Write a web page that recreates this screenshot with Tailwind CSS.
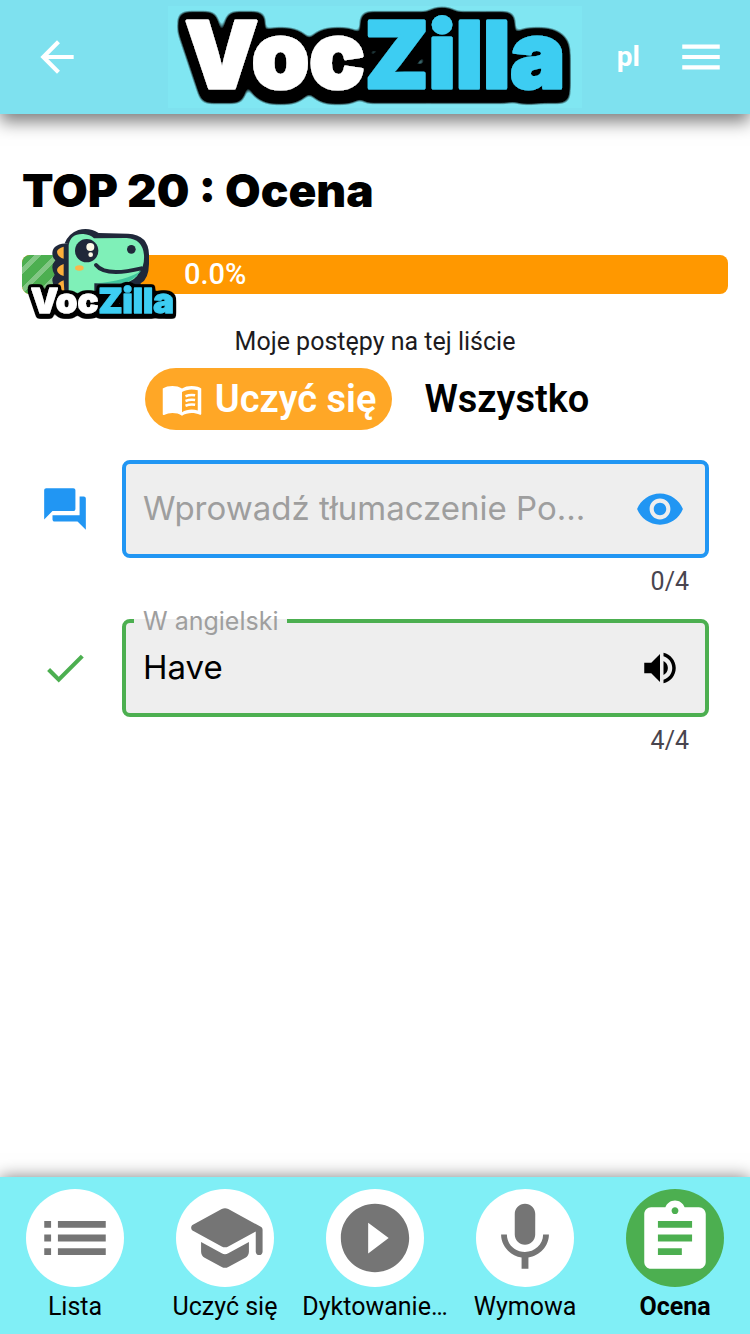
<!DOCTYPE html>
<html lang="pl">
<head>
<meta charset="utf-8">
<meta name="viewport" content="width=device-width, initial-scale=1">
<title>VocZilla</title>
<script src="https://cdn.jsdelivr.net/npm/@tailwindcss/browser@4"></script>
</head>
<body class="flex min-h-screen flex-col bg-white font-[Roboto,sans-serif] text-black">

<header class="relative z-10 flex h-[114px] items-center bg-[#7ee1ef] px-6 text-white shadow-[0_8px_16px_rgba(0,0,0,0.5)]">
  <div class="flex flex-1">
    <button type="button" aria-label="Wstecz" class="ml-2">
      <svg viewBox="0 0 24 24" class="size-[50px]" fill="currentColor"><path d="M20 11H7.83l5.59-5.59L12 4l-8 8 8 8 1.41-1.41L7.83 13H20v-2z"/></svg>
    </button>
  </div>
  <a href="#" aria-label="VocZilla" class="bg-[#80e6f2]">
    <svg viewBox="0 0 414 102" class="h-[102px] w-[414px] overflow-visible">
      <!-- Rounded black outline, a little heavier below the letters -->
      <filter id="outline" x="-10%" y="-30%" width="120%" height="160%">
        <feMorphology in="SourceAlpha" operator="dilate" radius="4"/>
        <feGaussianBlur stdDeviation="4"/>
        <feComponentTransfer result="rim"><feFuncA type="linear" slope="7" intercept="-0.800"/></feComponentTransfer>
        <feOffset in="rim" dy="6" result="low"/>
        <feMerge><feMergeNode in="low"/><feMergeNode in="rim"/><feMergeNode in="SourceGraphic"/></feMerge>
      </filter>
      <text x="207" y="82" font-family="Inter, sans-serif" font-weight="900" font-size="92" text-anchor="middle" stroke-linejoin="round" stroke-width="3" fill="#fff" stroke="#fff" filter="url(#outline)">Voc<tspan fill="#3dcdf2" stroke="#3dcdf2">Zilla</tspan></text>
    </svg>
  </a>
  <div class="flex flex-1 items-center justify-end gap-9">
    <button type="button" class="text-[28px] font-bold">pl</button>
    <button type="button" aria-label="Menu">
      <svg viewBox="0 0 24 24" class="size-[50px]" fill="currentColor"><path d="M3 18h18v-2H3v2zm0-5h18v-2H3v2zm0-7v2h18V6H3z"/></svg>
    </button>
  </div>
</header>

<main class="flex flex-1 flex-col px-[22px] pt-12">
  <h1 class="font-[Inter,sans-serif] text-[46px] leading-[56px] font-black">TOP 20 : Ocena</h1>

  <div class="relative mt-[37px] flex h-[39px] items-center rounded-lg bg-[#ff9800]" role="progressbar" aria-valuenow="0" aria-valuemin="0" aria-valuemax="100" aria-label="Moje postępy na tej liście">
    <div class="h-full w-[70px] rounded-l-lg bg-[#4caf50] bg-[repeating-linear-gradient(135deg,transparent_0_9px,rgba(255,255,255,0.3)_9px_14px)]"></div>
    <span class="ml-[92px] text-[29px] font-medium text-white">0.0%</span>
    <svg viewBox="45 24 465 276" class="absolute -top-[27px] left-[3px] h-[92px] w-[155px] overflow-visible" aria-hidden="true">
      <filter id="outline-small" x="-10%" y="-30%" width="120%" height="160%">
        <feMorphology in="SourceAlpha" operator="dilate" radius="6"/>
        <feGaussianBlur stdDeviation="5"/>
        <feComponentTransfer result="rim"><feFuncA type="linear" slope="5" intercept="-0.500"/></feComponentTransfer>
        <feOffset in="rim" dy="7" result="low"/>
        <feMerge><feMergeNode in="low"/><feMergeNode in="rim"/><feMergeNode in="SourceGraphic"/></feMerge>
      </filter>
      <g stroke-linejoin="round">
        <path d="M178 70Q128 70 127 99Q127 113 136 121Q119 139 134 164Q119 181 136 204L151 244H392V190Q416 178 417 132V104Q416 44 354 41L266 39Q238 21 205 30Q176 40 164 70Z" fill="#20283a"/>
        <path d="M161 80Q142 86 141 95Q142 111 161 116ZM161 132Q142 140 141 150Q142 162 161 168ZM161 181Q142 188 142 199L150 213H163Z" fill="#fcaf3b"/>
        <path d="M176 244V75Q182 40 220 42Q240 43 252 55L350 54Q398 57 402 105Q404 138 388 155Q378 183 339 190H253V244Z" fill="#7ff0b8"/>
        <path d="M394 152Q368 184 339 190H253Q350 182 394 152Z" fill="#3fc59c"/>
        <path d="M258 135C280 163 340 158 394 145" fill="none" stroke="#20283a" stroke-width="12" stroke-linecap="round"/>
        <circle cx="230" cy="92" r="35" fill="#20283a"/>
        <circle cx="241" cy="81" r="12" fill="#fffbe9"/>
        <circle cx="242" cy="104" r="7" fill="#fffbe9"/>
        <circle cx="364" cy="88" r="13" fill="#20283a"/>
        <ellipse cx="208" cy="144" rx="13" ry="8" fill="#f9b84b"/>
      </g>
      <text x="277" y="279" font-family="Inter, sans-serif" font-weight="900" font-size="104" text-anchor="middle" stroke-linejoin="round" stroke-width="3" fill="#fff" stroke="#fff" filter="url(#outline-small)">Voc<tspan fill="#3dcdf2" stroke="#3dcdf2">Zilla</tspan></text>
    </svg>
  </div>

  <p class="mt-8 text-center text-[25px] leading-8 text-[#1d1b20]">Moje postępy na tej liście</p>

  <div class="mt-[10px] flex justify-center gap-4 text-[38px] leading-none font-semibold">
    <button type="button" class="flex h-[62px] items-center gap-3 rounded-full bg-[#ffa726] px-4 text-white">
      <svg viewBox="0 0 24 24" class="size-[42px]" fill="currentColor"><path d="M21 5c-1.11-.35-2.33-.5-3.5-.5-1.95 0-4.05.4-5.5 1.5-1.45-1.1-3.55-1.5-5.5-1.5S2.45 4.9 1 6v14.65c0 .25.25.5.5.5.1 0 .15-.05.25-.05C3.1 20.45 5.05 20 6.5 20c1.95 0 4.05.4 5.5 1.5 1.35-.85 3.8-1.5 5.5-1.5 1.65 0 3.35.3 4.75 1.05.1.05.15.05.25.05.25 0 .5-.25.5-.5V6c-.6-.45-1.25-.75-2-1zm0 13.5c-1.1-.35-2.3-.5-3.5-.5-1.7 0-4.15.65-5.5 1.5V8c1.35-.85 3.8-1.5 5.5-1.5 1.2 0 2.4.15 3.5.5v11.5z"/><path d="M14 10.4q2.700-1 5.500-.5M14 13.100q2.700-1 5.500-.5M14 15.800q2.700-1 5.500-.5" fill="none" stroke="currentColor" stroke-width="1.500"/></svg>
      Uczyć się
    </button>
    <button type="button" class="h-[62px] px-4">Wszystko</button>
  </div>

  <form class="mt-[30px] mr-[19px] ml-[18px] flex flex-col gap-[21px]">
    <div class="grid grid-cols-[82px_minmax(0,1fr)]">
      <svg viewBox="0 0 24 24" class="size-[50px] self-center text-[#2196f3]" fill="currentColor"><path d="M21 6h-2v9H6v2c0 .55.45 1 1 1h11l4 4V7c0-.55-.45-1-1-1zm-4 6V3c0-.55-.45-1-1-1H3c-.55 0-1 .45-1 1v14l4-4h10c.55 0 1-.45 1-1z"/></svg>
      <div class="flex h-[98px] items-center gap-3 rounded-lg border-4 border-[#2196f3] bg-[#eee] pr-5 pl-[17px] font-[Inter,sans-serif]">
        <input id="pl" type="text" maxlength="4" aria-label="Wprowadź tłumaczenie" placeholder="Wprowadź tłumaczenie Po…" class="min-w-0 flex-1 text-[33px] outline-none placeholder:text-[#9e9e9e]">
        <button type="button" aria-label="Pokaż" class="text-[#2196f3]">
          <svg viewBox="0 0 24 24" class="size-[50px]" fill="currentColor"><path d="M12 4.500C7 4.500 2.730 7.610 1 12c1.730 4.390 6 7.500 11 7.500s9.270-3.110 11-7.500c-1.730-4.390-6-7.500-11-7.500zM12 17c-2.760 0-5-2.240-5-5s2.240-5 5-5 5 2.240 5 5-2.240 5-5 5zm0-8c-1.660 0-3 1.340-3 3s1.340 3 3 3 3-1.340 3-3-1.340-3-3-3z"/></svg>
        </button>
      </div>
      <p class="col-start-2 mt-2 pr-5 text-right text-[25px] leading-8 text-[#49454f]">0/4</p>
    </div>

    <div class="grid grid-cols-[82px_minmax(0,1fr)]">
      <svg viewBox="0 0 24 24" class="size-[50px] self-center text-[#4caf50]" fill="currentColor"><path d="M9 16.170L4.830 12l-1.420 1.410L9 19 21 7l-1.410-1.410z"/></svg>
      <div class="relative flex h-[98px] items-center gap-3 rounded-lg border-4 border-[#4caf50] bg-[#eee] pr-6 pl-[17px] font-[Inter,sans-serif]">
        <label for="en" class="absolute -top-4 left-2 bg-linear-to-b from-transparent from-[12px] to-[#eee] to-[12px] px-[9px] text-[25px] leading-7 text-[#9e9e9e]">W angielski</label>
        <input id="en" type="text" value="Have" maxlength="4" class="min-w-0 flex-1 text-[33px] outline-none">
        <button type="button" aria-label="Odsłuchaj">
          <svg viewBox="0 0 24 24" class="size-[42px]" fill="currentColor"><path d="M3 9v6h4l5 5V4L7 9H3zm13.500 3c0-1.770-1.020-3.290-2.500-4.030v8.050c1.480-.73 2.500-2.250 2.500-4.020zM14 3.230v2.060c2.890.86 5 3.540 5 6.710s-2.110 5.850-5 6.710v2.060c4.010-.91 7-4.490 7-8.770s-2.990-7.860-7-8.770z"/></svg>
        </button>
      </div>
      <p class="col-start-2 mt-2 pr-5 text-right text-[25px] leading-8 text-[#49454f]">4/4</p>
    </div>
  </form>
</main>

<nav class="grid h-[157px] grid-cols-5 bg-[#80eff6] pt-3 text-center text-[25px] leading-8 shadow-[0_0_16px_rgba(0,0,0,0.5)]">
  <a href="#" class="flex flex-col items-center gap-1">
    <span class="flex size-[98px] items-center justify-center rounded-full bg-white text-[#757575]">
      <svg viewBox="0 0 24 24" class="size-[82px]" fill="currentColor"><path d="M3 13h2v-2H3v2zm0 4h2v-2H3v2zm0-8h2V7H3v2zm4 4h14v-2H7v2zm0 4h14v-2H7v2zM7 7v2h14V7H7z"/></svg>
    </span>
    Lista
  </a>
  <a href="#" class="flex flex-col items-center gap-1">
    <span class="flex size-[98px] items-center justify-center rounded-full bg-white text-[#757575]">
      <svg viewBox="0 0 24 24" class="size-[82px]" fill="currentColor"><path d="M5 13.180v2.810c0 .73.4 1.410 1.040 1.760l5 2.730c.6.33 1.320.33 1.920 0l5-2.730c.64-.35 1.040-1.030 1.040-1.760v-2.810l-6.040 3.300c-.6.33-1.320.33-1.920 0L5 13.180zm6.040-9.660l-8.430 4.600c-.69.38-.69 1.380 0 1.760l8.430 4.600c.6.33 1.320.33 1.920 0L21 10.090V16c0 .55.45 1 1 1s1-.45 1-1V9.590c0-.37-.2-.7-.52-.88l-9.520-5.190c-.6-.32-1.320-.32-1.920 0z"/></svg>
    </span>
    Uczyć się
  </a>
  <a href="#" class="flex flex-col items-center gap-1">
    <span class="flex size-[98px] items-center justify-center rounded-full bg-white text-[#757575]">
      <svg viewBox="0 0 24 24" class="size-[82px]" fill="currentColor"><path d="M12 2C6.480 2 2 6.480 2 12s4.480 10 10 10 10-4.480 10-10S17.520 2 12 2zm-2 14.500v-9l6 4.500-6 4.500z"/></svg>
    </span>
    Dyktowanie…
  </a>
  <a href="#" class="flex flex-col items-center gap-1">
    <span class="flex size-[98px] items-center justify-center rounded-full bg-white text-[#757575]">
      <svg viewBox="0 0 24 24" class="size-[82px]" fill="currentColor"><path d="M12 14c1.660 0 2.990-1.340 2.990-3L15 5c0-1.660-1.340-3-3-3S9 3.340 9 5v6c0 1.660 1.340 3 3 3zm5.300-3c0 3-2.540 5.100-5.300 5.100S6.700 14 6.700 11H5c0 3.410 2.720 6.230 6 6.720V21h2v-3.280c3.280-.48 6-3.300 6-6.720h-1.700z"/></svg>
    </span>
    Wymowa
  </a>
  <a href="#" aria-current="page" class="flex flex-col items-center gap-1 font-bold">
    <span class="flex size-[98px] items-center justify-center rounded-full bg-[#4caf50] text-white">
      <svg viewBox="0 0 24 24" class="size-[82px]" fill="currentColor"><path d="M19 3h-4.180C14.400 1.840 13.300 1 12 1c-1.300 0-2.400.84-2.820 2H5c-1.100 0-2 .9-2 2v14c0 1.100.9 2 2 2h14c1.100 0 2-.9 2-2V5c0-1.100-.9-2-2-2zm-7 0c.55 0 1 .45 1 1s-.45 1-1 1-1-.45-1-1 .45-1 1-1zm2 14H7v-2h7v2zm3-4H7v-2h10v2zm0-4H7V7h10v2z"/></svg>
    </span>
    Ocena
  </a>
</nav>
</body>
</html>
